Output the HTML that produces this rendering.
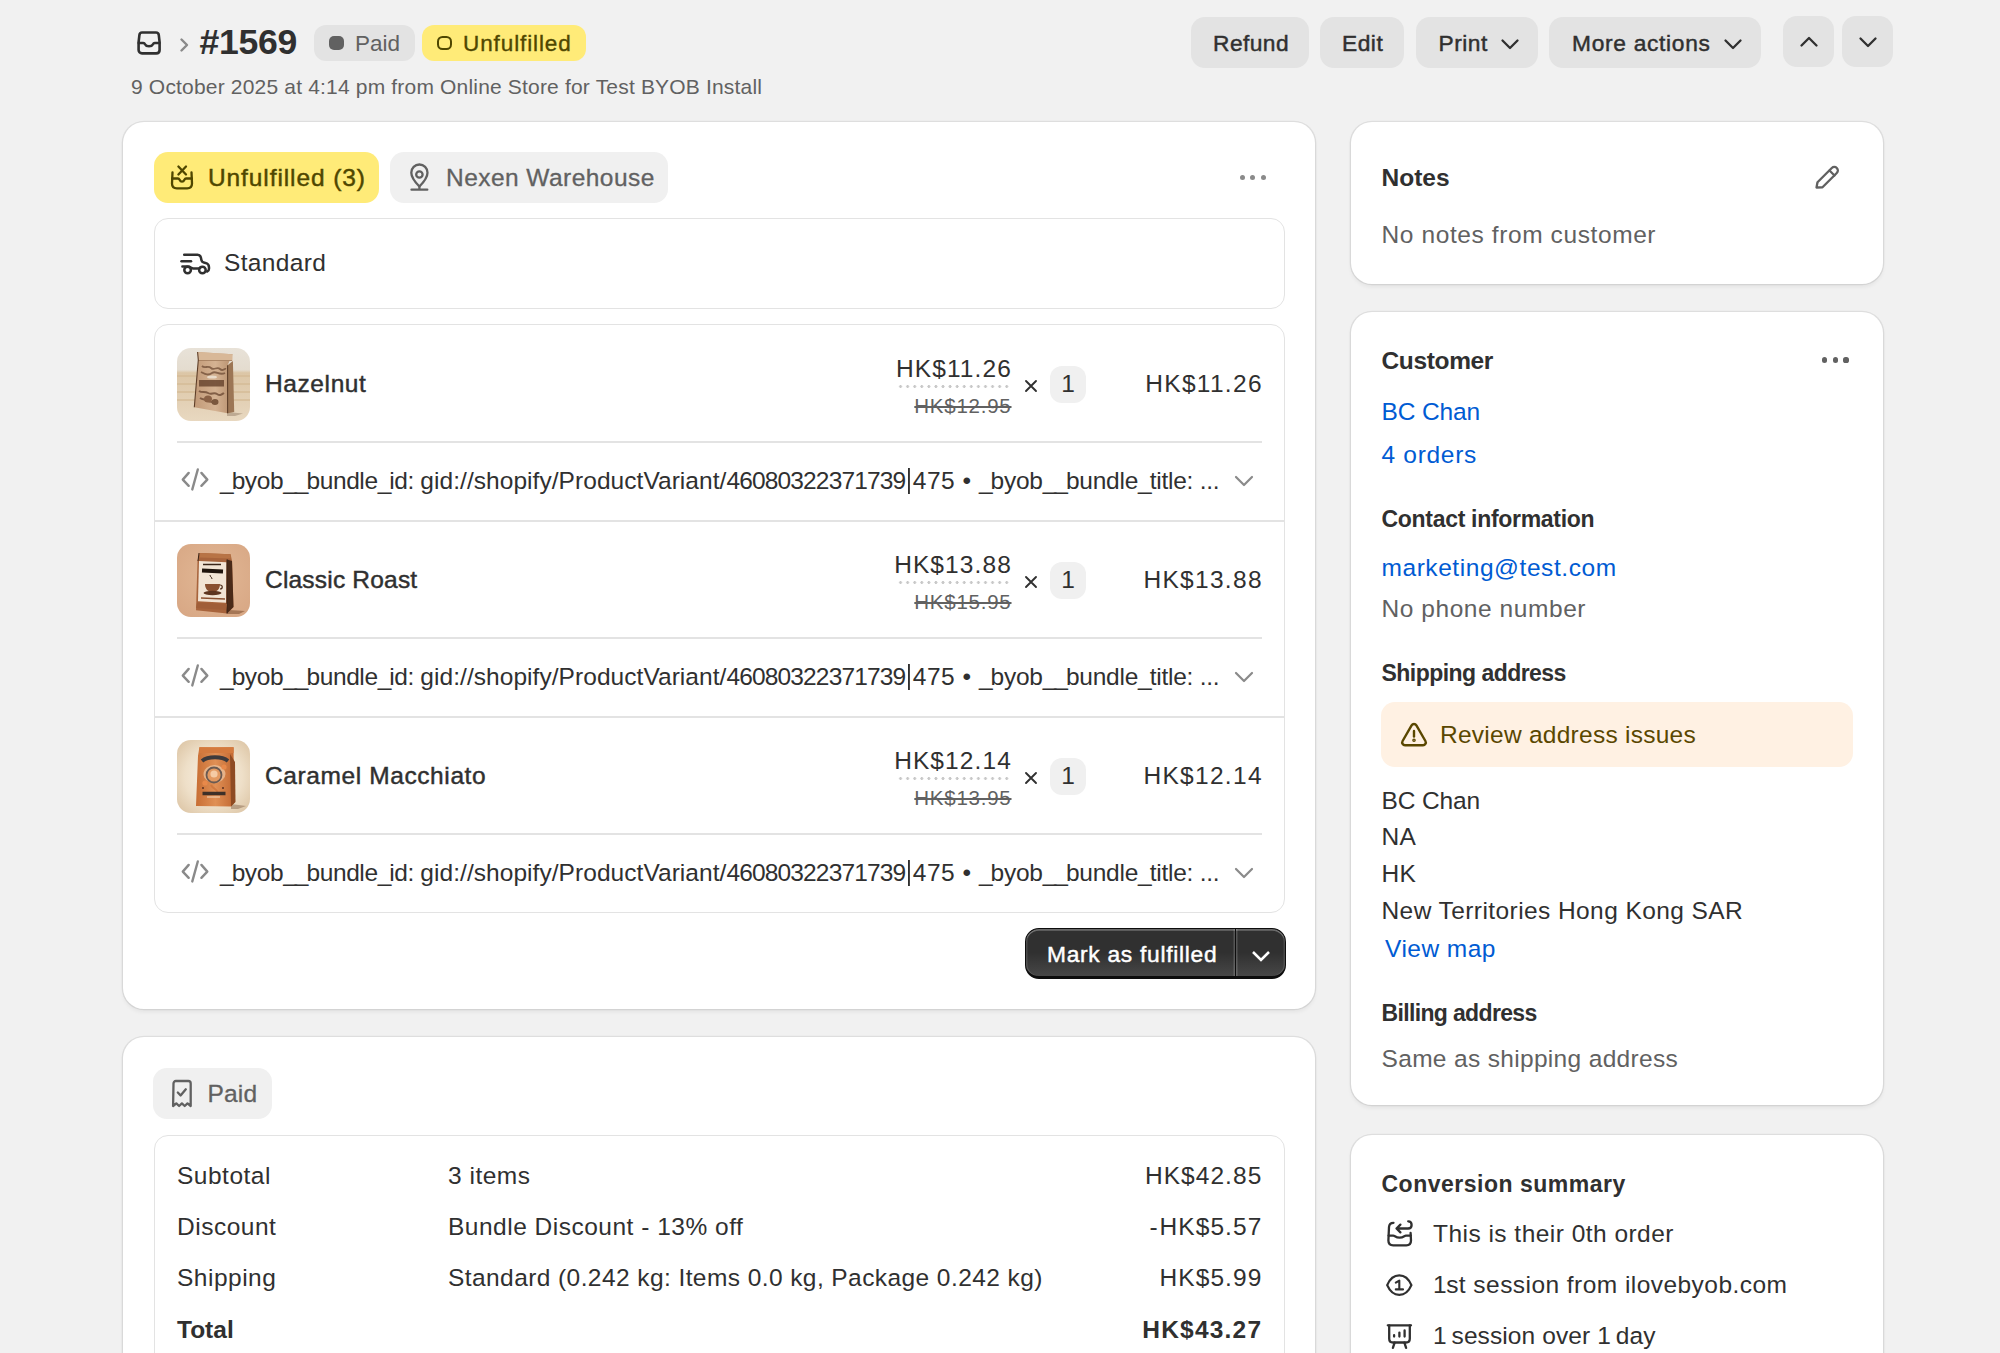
<!DOCTYPE html>
<html><head><meta charset="utf-8">
<style>
*{box-sizing:border-box;margin:0;padding:0}
html,body{width:2000px;height:1353px;overflow:hidden;background:#f1f1f1}
body{position:relative;font-family:"Liberation Sans",sans-serif;color:#303030}
.a{position:absolute}
.t{position:absolute;line-height:1;white-space:nowrap}
.card{position:absolute;background:#fff;border-radius:21px;box-shadow:0 0 0 1.3px rgba(0,0,0,.075),0 2.5px 4px rgba(0,0,0,.06)}
.btn{position:absolute;background:#e3e3e3;border-radius:14px}
.box{position:absolute;border:1.75px solid #e3e3e3;border-radius:14px}
.nm{letter-spacing:0.6px}
.sm{-webkit-text-stroke:0.45px currentColor}
.f24{font-size:24.5px}
.sec{color:#616161}
.blue{color:#005bd3}
svg{position:absolute;overflow:visible}
</style></head><body>

<!-- ===== HEADER ===== -->
<svg style="left:137px;top:31px" width="24" height="24" viewBox="0 0 24 24" fill="none" stroke="#303030" stroke-width="2.6" stroke-linecap="round" stroke-linejoin="round">
  <path d="M5 1.5h14c1.6 0 2.6 1.1 2.8 2.6l.8 7V19c0 2-1.4 3.4-3.4 3.4H5c-2 0-3.4-1.4-3.4-3.4v-7.9l.8-7C2.6 2.6 3.5 1.5 5 1.5z"/>
  <path d="M1.8 12h4.4c1 0 1.6.7 2 1.5.5 1 1.9 1.8 3.8 1.8s3.3-.8 3.8-1.8c.4-.8 1-1.5 2-1.5h4.4"/>
</svg>
<svg style="left:180px;top:38px" width="9" height="14" viewBox="0 0 9 14" fill="none" stroke="#8a8a8a" stroke-width="2.4" stroke-linecap="round" stroke-linejoin="round"><path d="M1.5 1.5l5.5 5.5-5.5 5.5"/></svg>
<div class="t" style="left:199.5px;top:24.5px;font-size:35.6px;font-weight:bold;letter-spacing:-0.3px">#1569</div>

<div class="a" style="left:314px;top:24.5px;width:101px;height:36px;border-radius:12px;background:#e3e3e3"></div>
<div class="a" style="left:328.5px;top:36px;width:15px;height:14px;border-radius:5px;background:#616161"></div>
<div class="t sec" style="left:355px;top:33px;font-size:22.5px">Paid</div>

<div class="a" style="left:422px;top:24.5px;width:164px;height:36px;border-radius:12px;background:#ffeb78"></div>
<div class="a" style="left:436.5px;top:36px;width:15px;height:14px;border-radius:5.5px;border:2.4px solid #4f4700"></div>
<div class="t" style="left:463px;top:33px;font-size:22.5px;color:#4f4700;letter-spacing:0.9px;-webkit-text-stroke:0.35px #4f4700">Unfulfilled</div>

<div class="t sec" style="left:131px;top:76px;font-size:21px;letter-spacing:0.18px">9 October 2025 at 4:14 pm from Online Store for Test BYOB Install</div>

<div class="btn" style="left:1191px;top:17px;width:118px;height:51px"></div>
<div class="t sm" style="left:1213px;top:32px;font-size:22.75px;letter-spacing:0.45px">Refund</div>
<div class="btn" style="left:1320px;top:17px;width:84px;height:51px"></div>
<div class="t sm" style="left:1342px;top:32px;font-size:22.75px;letter-spacing:0.5px">Edit</div>
<div class="btn" style="left:1416px;top:17px;width:122px;height:51px"></div>
<div class="t sm" style="left:1438.5px;top:32px;font-size:22.75px;letter-spacing:0.5px">Print</div>
<svg style="left:1501px;top:39px" width="18" height="11" viewBox="0 0 18 11" fill="none" stroke="#303030" stroke-width="2.3" stroke-linecap="round" stroke-linejoin="round"><path d="M1.5 1.5l7.5 7.5 7.5-7.5"/></svg>
<div class="btn" style="left:1549px;top:17px;width:212px;height:51px"></div>
<div class="t sm" style="left:1572px;top:32px;font-size:22.75px;letter-spacing:0.7px">More actions</div>
<svg style="left:1723.5px;top:39px" width="18" height="11" viewBox="0 0 18 11" fill="none" stroke="#303030" stroke-width="2.3" stroke-linecap="round" stroke-linejoin="round"><path d="M1.5 1.5l7.5 7.5 7.5-7.5"/></svg>
<div class="btn" style="left:1783px;top:16px;width:51px;height:51px"></div>
<svg style="left:1800px;top:36px" width="18" height="11" viewBox="0 0 18 11" fill="none" stroke="#303030" stroke-width="2.3" stroke-linecap="round" stroke-linejoin="round"><path d="M1.5 9.5l7.5-7.5 7.5 7.5"/></svg>
<div class="btn" style="left:1842px;top:16px;width:51px;height:51px"></div>
<svg style="left:1858.5px;top:37px" width="18" height="11" viewBox="0 0 18 11" fill="none" stroke="#303030" stroke-width="2.3" stroke-linecap="round" stroke-linejoin="round"><path d="M1.5 1.5l7.5 7.5 7.5-7.5"/></svg>

<!-- ===== MAIN CARD 1 ===== -->
<div class="card" style="left:123px;top:122px;width:1192px;height:887px"></div>

<!-- tags -->
<div class="a" style="left:153.5px;top:152px;width:225px;height:51px;border-radius:14px;background:#ffeb78"></div>
<svg style="left:168px;top:163px" width="28" height="28" viewBox="0 0 28 28" fill="none" stroke="#4f4700" stroke-width="2.3" stroke-linecap="round" stroke-linejoin="round">
 <path d="M10.4 3.5l7.6 8M18 3.5l-7.6 8"/>
 <path d="M4.5 9.4L4 20.5c0 3.2 1.8 4.8 4.8 4.8h10.4c3 0 4.8-1.6 4.8-4.8L23.5 9.4"/>
 <path d="M4.2 15.5h5.8c.8 0 1.2.5 1.6 1.3.5 1.2 1.3 1.9 2.4 1.9s1.9-.7 2.4-1.9c.4-.8.8-1.3 1.6-1.3h5.8"/>
</svg>
<div class="t sm" style="left:208px;top:166px;font-size:24.5px;color:#4f4700;letter-spacing:0.9px">Unfulfilled (3)</div>

<div class="a" style="left:390px;top:152px;width:278px;height:51px;border-radius:14px;background:#f0f0f0"></div>
<svg style="left:405px;top:160px" width="28" height="35" viewBox="0 0 28 35" fill="none" stroke="#616161" stroke-width="2.3" stroke-linecap="round" stroke-linejoin="round">
 <path d="M14.4 26.5C9.5 21.5 6.3 17 6.3 12.7c0-4.6 3.6-8.2 8.1-8.2s8.1 3.6 8.1 8.2c0 4.3-3.2 8.8-8.1 13.8z"/>
 <circle cx="14.4" cy="14.5" r="3.2"/>
 <path d="M6.5 29.7h15.8M14.4 26.5v3"/>
</svg>
<div class="t sec" style="left:446px;top:165.5px;font-size:24.5px;letter-spacing:0.45px;-webkit-text-stroke:0.3px #616161">Nexen Warehouse</div>

<div class="a" style="left:1239.8px;top:175px;width:5.2px;height:5.2px;border-radius:50%;background:#8a8a8a"></div>
<div class="a" style="left:1250.25px;top:175px;width:5.2px;height:5.2px;border-radius:50%;background:#8a8a8a"></div>
<div class="a" style="left:1260.7px;top:175px;width:5.2px;height:5.2px;border-radius:50%;background:#8a8a8a"></div>

<!-- standard box -->
<div class="box" style="left:153.5px;top:218px;width:1131px;height:91px"></div>
<svg style="left:175px;top:250px" width="40" height="30" viewBox="0 0 40 30" fill="none" stroke="#303030" stroke-width="2.5" stroke-linecap="round" stroke-linejoin="round">
 <path d="M9.2 4.7H22.6c1.6 0 2.8 1 3.2 2.6l.8 3.4c.3 1.1 1.1 1.7 2.2 1.9l1.6.3c2.2.5 3.6 2.2 3.6 4.4v1.4c0 1.4-.7 2.4-1.8 2.8"/>
 <path d="M6.5 11.2h9.5"/>
 <path d="M7.4 16.6h5.6c1.4 0 2.4.7 3.3 1.3.6.4 1.3.6 2 .6h4.6c.8 0 1.6-.3 2.2-.8"/>
 <circle cx="12.6" cy="20" r="3.3"/>
 <circle cx="27.4" cy="20" r="3.3"/>
</svg>
<div class="t" style="left:224px;top:251.3px;font-size:24.5px;letter-spacing:0.35px">Standard</div>

<!-- products box -->
<div class="box" style="left:153.5px;top:324px;width:1131px;height:589px"></div>

<div class="a img-hz" style="left:177px;top:348px;width:73px;height:73px;border-radius:14px;overflow:hidden"><svg width="73" height="73" viewBox="0 0 73 73" style="position:static;display:block">
<defs><linearGradient id="hzbg" x1="0" y1="0" x2="0" y2="1"><stop offset="0" stop-color="#e8e2d8"/><stop offset=".3" stop-color="#e4dccf"/><stop offset=".34" stop-color="#dcc6a6"/><stop offset="1" stop-color="#e8d8c0"/></linearGradient>
<linearGradient id="hzbag" x1="0" y1="0" x2="1" y2="0"><stop offset="0" stop-color="#c29a78"/><stop offset=".55" stop-color="#d4b292"/><stop offset="1" stop-color="#b68e6c"/></linearGradient></defs>
<rect width="73" height="73" fill="url(#hzbg)"/>
<path d="M0 28h73M0 36h73M0 44h73M0 52h73" stroke="#d5bb96" stroke-width="2" opacity=".7"/>
<path d="M50 64l16 1.5-8 2.5-8 0z" fill="#8b7560" opacity=".45"/>
<path d="M20.6 4L55.6 6.3 50.6 17.3 50.6 65.2 17.3 59.2 21.3 12z" fill="url(#hzbag)"/>
<path d="M20.6 4L55.6 6.3 55.4 13 21.3 12z" fill="#d8b898"/>
<path d="M21 12.5h34" stroke="#a07a5a" stroke-width=".8"/>
<path d="M50.6 17.3L55.9 13 57.2 63.9 50.6 65.2z" fill="#9c7655"/>
<path d="M20.6 4l.7 8-4 47.2M50.6 17.3v48" stroke="#5e3e28" stroke-width="1.1" fill="none"/>
<path d="M25 18c3 3 6-1 9 2s6-2 9 1 4-1 6 0M24 24c4 2 7 4 11 1s7 3 13 0" stroke="#6e4b34" stroke-width="1.8" fill="none" opacity=".75"/>
<ellipse cx="35" cy="29" rx="5" ry="1.6" fill="#efe6d8" opacity=".8"/>
<rect x="22" y="32" width="25" height="6.5" fill="#6a4630" opacity=".85"/>
<path d="M22 43c3 2 6 0 9 2s6-1 9 1 4 1 7-1M23 50c3 2 6 1 8 3 3 2 6 0 9 1" stroke="#6e4b34" stroke-width="2" fill="none" opacity=".8"/>
<ellipse cx="31" cy="51" rx="4" ry="3.5" fill="#8a6145"/>
<ellipse cx="38" cy="54" rx="3.5" ry="3" fill="#7b573d"/>
</svg></div>
<div class="t sm nm" style="left:265px;top:371.6px;font-size:24.5px">Hazelnut</div>
<div class="t" style="right:988.1px;top:357.3px;font-size:24.5px;letter-spacing:1.1px">HK$11.26</div>
<div class="a" style="left:897px;top:384.7px;width:114px;height:3px;background:radial-gradient(circle,#c8c8c8 1.2px,transparent 1.7px) 0 0/7.08px 3px repeat-x"></div>
<div class="t sec" style="right:988.5px;top:396px;font-size:20.5px;text-decoration:line-through;text-decoration-thickness:1.75px;letter-spacing:0.75px">HK$12.95</div>
<svg style="left:1025px;top:380px" width="12" height="12" viewBox="0 0 12 12" fill="none" stroke="#303030" stroke-width="1.9" stroke-linecap="round"><path d="M1 1l10 10M11 1L1 11"/></svg>
<div class="a" style="left:1050px;top:366px;width:36px;height:37px;border-radius:12px;background:#f0f0f0"></div>
<div class="t" style="left:1050px;width:36px;text-align:center;top:371.9px;font-size:24.5px">1</div>
<div class="t" style="right:737.2px;top:372.4px;font-size:24.5px;letter-spacing:1.3px">HK$11.26</div>
<div class="a" style="left:177px;top:441px;width:1085px;height:1.75px;background:#e3e3e3"></div>
<svg style="left:175px;top:462px" width="40" height="35" viewBox="0 0 40 35" fill="none" stroke="#8a8a8a" stroke-width="2.4" stroke-linecap="round" stroke-linejoin="round"><path d="M13.7 10.9L7.8 17.6l5.9 6.2M22.8 7.5l-5.5 19.9M26.4 10.9l5.9 6.7-5.9 6.2"/></svg>
<div class="t" style="left:220px;top:467.8px;font-size:24.5px"><span style="letter-spacing:-0.4px"><span style="letter-spacing:-2.0px">_</span>byob<span style="letter-spacing:-2.0px">_</span><span style="letter-spacing:-2.0px">_</span>bundle<span style="letter-spacing:-2.0px">_</span>id: </span><span style="letter-spacing:0.05px">gid://shopify/ProductVariant/</span><span style="letter-spacing:-0.85px">46080322371739</span><span style="display:inline-block;width:7.5px;height:26px;vertical-align:-5.5px;background:linear-gradient(#303030,#303030) 50% 0/1.9px 100% no-repeat"></span><span style="letter-spacing:0.5px">475 &#8226; </span><span style="letter-spacing:-0.25px"><span style="letter-spacing:-2.0px">_</span>byob<span style="letter-spacing:-2.0px">_</span><span style="letter-spacing:-2.0px">_</span>bundle<span style="letter-spacing:-2.0px">_</span>title: ...</span></div>
<svg style="left:1234px;top:474px" width="20" height="14" viewBox="0 0 20 14" fill="none" stroke="#8a8a8a" stroke-width="2.2" stroke-linecap="round" stroke-linejoin="round"><path d="M2 3l8 8 8-8"/></svg>
<div class="a" style="left:155px;top:520px;width:1129px;height:1.75px;background:#e3e3e3"></div>

<div class="a img-cr" style="left:177px;top:544px;width:73px;height:73px;border-radius:14px;overflow:hidden"><svg width="73" height="73" viewBox="0 0 73 73" style="position:static;display:block">
<defs><radialGradient id="crbg" cx=".5" cy=".45" r=".75"><stop offset="0" stop-color="#e2b896"/><stop offset="1" stop-color="#d7a683"/></radialGradient></defs>
<rect width="73" height="73" fill="url(#crbg)"/>
<path d="M52 66l16 1-6 3-12 0z" fill="#7a4a2c" opacity=".55"/>
<path d="M22.6 9L53.6 10.3 55 17 56.5 63 50 69.5 19 66.3 20.5 17z" fill="#a8643c"/>
<path d="M22.6 9L53.6 10.3 53.6 14.5 22.6 13.5z" fill="#b87446"/>
<path d="M50 15.5L55 17 56.5 63 50 69.5z" fill="#4a2a18"/>
<path d="M22 17l27.5 1.2-.5 40.5-28 -1.5z" fill="#f2e4d4"/>
<path d="M21 17l1-8M50 15.5v54" stroke="#3a2214" stroke-width="1" fill="none"/>
<path d="M26 20.5h18" stroke="#3a2518" stroke-width="1.6"/>
<path d="M25 26.5l21 1" stroke="#1f140c" stroke-width="4.2"/>
<path d="M33 31c0 2 2 2 2 4" stroke="#3a2518" stroke-width="1" fill="none"/>
<path d="M28 40c0 5 3 8 7.5 8s7.5-3 7.5-8z" fill="#8a5030"/>
<path d="M43 41c3 0 3 4 0 4" stroke="#4a2a18" stroke-width="1.2" fill="none"/>
<ellipse cx="35.5" cy="49" rx="9" ry="2.2" fill="#5e351f"/>
<path d="M24 54l24 1" stroke="#8a5030" stroke-width="1.5"/>
<path d="M20 58.5l30 1.5-1 6-30-2z" fill="#a05e38"/>
</svg></div>
<div class="t sm nm" style="left:265px;top:567.6px;font-size:24.5px;letter-spacing:0.2px">Classic Roast</div>
<div class="t" style="right:988.1px;top:553.3px;font-size:24.5px;letter-spacing:1.1px">HK$13.88</div>
<div class="a" style="left:897px;top:580.7px;width:114px;height:3px;background:radial-gradient(circle,#c8c8c8 1.2px,transparent 1.7px) 0 0/7.08px 3px repeat-x"></div>
<div class="t sec" style="right:988.5px;top:592px;font-size:20.5px;text-decoration:line-through;text-decoration-thickness:1.75px;letter-spacing:0.75px">HK$15.95</div>
<svg style="left:1025px;top:576px" width="12" height="12" viewBox="0 0 12 12" fill="none" stroke="#303030" stroke-width="1.9" stroke-linecap="round"><path d="M1 1l10 10M11 1L1 11"/></svg>
<div class="a" style="left:1050px;top:562px;width:36px;height:37px;border-radius:12px;background:#f0f0f0"></div>
<div class="t" style="left:1050px;width:36px;text-align:center;top:567.9px;font-size:24.5px">1</div>
<div class="t" style="right:737.2px;top:568.4px;font-size:24.5px;letter-spacing:1.3px">HK$13.88</div>
<div class="a" style="left:177px;top:637px;width:1085px;height:1.75px;background:#e3e3e3"></div>
<svg style="left:175px;top:658px" width="40" height="35" viewBox="0 0 40 35" fill="none" stroke="#8a8a8a" stroke-width="2.4" stroke-linecap="round" stroke-linejoin="round"><path d="M13.7 10.9L7.8 17.6l5.9 6.2M22.8 7.5l-5.5 19.9M26.4 10.9l5.9 6.7-5.9 6.2"/></svg>
<div class="t" style="left:220px;top:663.8px;font-size:24.5px"><span style="letter-spacing:-0.4px"><span style="letter-spacing:-2.0px">_</span>byob<span style="letter-spacing:-2.0px">_</span><span style="letter-spacing:-2.0px">_</span>bundle<span style="letter-spacing:-2.0px">_</span>id: </span><span style="letter-spacing:0.05px">gid://shopify/ProductVariant/</span><span style="letter-spacing:-0.85px">46080322371739</span><span style="display:inline-block;width:7.5px;height:26px;vertical-align:-5.5px;background:linear-gradient(#303030,#303030) 50% 0/1.9px 100% no-repeat"></span><span style="letter-spacing:0.5px">475 &#8226; </span><span style="letter-spacing:-0.25px"><span style="letter-spacing:-2.0px">_</span>byob<span style="letter-spacing:-2.0px">_</span><span style="letter-spacing:-2.0px">_</span>bundle<span style="letter-spacing:-2.0px">_</span>title: ...</span></div>
<svg style="left:1234px;top:670px" width="20" height="14" viewBox="0 0 20 14" fill="none" stroke="#8a8a8a" stroke-width="2.2" stroke-linecap="round" stroke-linejoin="round"><path d="M2 3l8 8 8-8"/></svg>
<div class="a" style="left:155px;top:716px;width:1129px;height:1.75px;background:#e3e3e3"></div>

<div class="a img-cm" style="left:177px;top:740px;width:73px;height:73px;border-radius:14px;overflow:hidden"><svg width="73" height="73" viewBox="0 0 73 73" style="position:static;display:block">
<defs><radialGradient id="cmbg" cx=".5" cy=".5" r=".72"><stop offset="0" stop-color="#faf2e6"/><stop offset=".55" stop-color="#eedfc8"/><stop offset="1" stop-color="#d9c09e"/></radialGradient>
<linearGradient id="cmbag" x1="0" y1="0" x2="1" y2="0"><stop offset="0" stop-color="#c86e34"/><stop offset=".5" stop-color="#e09055"/><stop offset="1" stop-color="#c06630"/></linearGradient></defs>
<rect width="73" height="73" fill="url(#cmbg)"/>
<path d="M54 64l15 2-8 3-7 0z" fill="#8a6a50" opacity=".5"/>
<path d="M22.4 7.3L56.6 7.3 56.6 16 58 62 54 66.5 19 66 21 16z" fill="url(#cmbag)"/>
<path d="M22.4 7.3L56.6 7.3 56.6 13 22.4 13z" fill="#d47a3e"/>
<path d="M53 14L58 22 58.5 62 54 66.5z" fill="#8e4a22"/>
<path d="M25 21c6-5 20-5 26 0" stroke="#3d3a3c" stroke-width="3.8" fill="none"/>
<ellipse cx="37.5" cy="34" rx="11" ry="9" fill="#f6dcc0" opacity=".55"/>
<circle cx="37" cy="35" r="7.5" fill="#e39a62" stroke="#6a5a52" stroke-width="1.8"/>
<circle cx="37" cy="34" r="3.6" fill="#f5cba5"/>
<circle cx="47" cy="27" r="2.6" fill="#e8894a"/>
<circle cx="28" cy="43" r="2.6" fill="#e8894a"/>
<path d="M34 45c2 4 6 4 7 8" stroke="#d07a40" stroke-width="2" fill="none"/>
<circle cx="26" cy="48" r="1" fill="#5a3020"/><circle cx="46" cy="48" r="1" fill="#5a3020"/>
<path d="M25.5 53.5h23" stroke="#3d3028" stroke-width="3.6"/>
<path d="M30 57h13" stroke="#f1d9bd" stroke-width="1.2"/>
</svg></div>
<div class="t sm nm" style="left:265px;top:763.6px;font-size:24.5px">Caramel Macchiato</div>
<div class="t" style="right:988.1px;top:749.3px;font-size:24.5px;letter-spacing:1.1px">HK$12.14</div>
<div class="a" style="left:897px;top:776.7px;width:114px;height:3px;background:radial-gradient(circle,#c8c8c8 1.2px,transparent 1.7px) 0 0/7.08px 3px repeat-x"></div>
<div class="t sec" style="right:988.5px;top:788px;font-size:20.5px;text-decoration:line-through;text-decoration-thickness:1.75px;letter-spacing:0.75px">HK$13.95</div>
<svg style="left:1025px;top:772px" width="12" height="12" viewBox="0 0 12 12" fill="none" stroke="#303030" stroke-width="1.9" stroke-linecap="round"><path d="M1 1l10 10M11 1L1 11"/></svg>
<div class="a" style="left:1050px;top:758px;width:36px;height:37px;border-radius:12px;background:#f0f0f0"></div>
<div class="t" style="left:1050px;width:36px;text-align:center;top:763.9px;font-size:24.5px">1</div>
<div class="t" style="right:737.2px;top:764.4px;font-size:24.5px;letter-spacing:1.3px">HK$12.14</div>
<div class="a" style="left:177px;top:833px;width:1085px;height:1.75px;background:#e3e3e3"></div>
<svg style="left:175px;top:854px" width="40" height="35" viewBox="0 0 40 35" fill="none" stroke="#8a8a8a" stroke-width="2.4" stroke-linecap="round" stroke-linejoin="round"><path d="M13.7 10.9L7.8 17.6l5.9 6.2M22.8 7.5l-5.5 19.9M26.4 10.9l5.9 6.7-5.9 6.2"/></svg>
<div class="t" style="left:220px;top:859.8px;font-size:24.5px"><span style="letter-spacing:-0.4px"><span style="letter-spacing:-2.0px">_</span>byob<span style="letter-spacing:-2.0px">_</span><span style="letter-spacing:-2.0px">_</span>bundle<span style="letter-spacing:-2.0px">_</span>id: </span><span style="letter-spacing:0.05px">gid://shopify/ProductVariant/</span><span style="letter-spacing:-0.85px">46080322371739</span><span style="display:inline-block;width:7.5px;height:26px;vertical-align:-5.5px;background:linear-gradient(#303030,#303030) 50% 0/1.9px 100% no-repeat"></span><span style="letter-spacing:0.5px">475 &#8226; </span><span style="letter-spacing:-0.25px"><span style="letter-spacing:-2.0px">_</span>byob<span style="letter-spacing:-2.0px">_</span><span style="letter-spacing:-2.0px">_</span>bundle<span style="letter-spacing:-2.0px">_</span>title: ...</span></div>
<svg style="left:1234px;top:866px" width="20" height="14" viewBox="0 0 20 14" fill="none" stroke="#8a8a8a" stroke-width="2.2" stroke-linecap="round" stroke-linejoin="round"><path d="M2 3l8 8 8-8"/></svg>

<!-- mark as fulfilled -->
<div class="a" style="left:1025px;top:928px;width:210.5px;height:51px;border-radius:14px 0 0 14px;border:1.75px solid #0d0d0d;border-bottom-width:3.5px;border-right-width:1px;background:linear-gradient(#303030 50%,#474747);box-shadow:inset 0 1.75px 0 rgba(255,255,255,.28),inset 1.5px 0 0 rgba(255,255,255,.12),inset -1.5px 0 0 rgba(255,255,255,.18)"></div>
<div class="a" style="left:1235px;top:928px;width:50.5px;height:51px;border-radius:0 14px 14px 0;border:1.75px solid #0d0d0d;border-bottom-width:3.5px;border-left-width:1px;background:linear-gradient(#303030 50%,#474747);box-shadow:inset 0 1.75px 0 rgba(255,255,255,.28),inset 1.5px 0 0 rgba(255,255,255,.18),inset -1.5px 0 0 rgba(255,255,255,.12)"></div>
<div class="t sm" style="left:1047px;top:943px;font-size:22.75px;color:#fff;letter-spacing:0.72px">Mark as fulfilled</div>
<svg style="left:1250px;top:949px" width="22" height="14" viewBox="0 0 22 14" fill="none" stroke="#fff" stroke-width="2.5" stroke-linecap="butt" stroke-linejoin="miter"><path d="M3 3l8 8 8-8"/></svg>


<!-- ===== MAIN CARD 2 ===== -->
<div class="card" style="left:123px;top:1037px;width:1192px;height:400px"></div>

<!-- paid tag -->
<div class="a" style="left:153px;top:1068px;width:119px;height:51px;border-radius:14px;background:#f0f0f0"></div>
<svg style="left:168px;top:1078px" width="30" height="32" viewBox="0 0 30 32" fill="none" stroke="#616161" stroke-width="2.3" stroke-linecap="round" stroke-linejoin="round">
 <path d="M5.5 5.5c0-1.4 1-2.5 2.4-2.5h12.4c1.4 0 2.4 1.1 2.4 2.5v22.5l-3.2-2.6-2.8 2.6-2.8-2.6-2.8 2.6-2.8-2.6-3.2 2.6z"/>
 <path d="M9.8 14.5l2.8 3 5.2-6.2"/>
</svg>
<div class="t sec" style="left:207.5px;top:1082px;font-size:24.5px;letter-spacing:0.2px;-webkit-text-stroke:0.3px #616161">Paid</div>
<div class="box" style="left:153.5px;top:1134.5px;width:1131px;height:300px"></div>
<div class="t" style="left:177px;top:1164.3px;font-size:24.5px;letter-spacing:0.5px">Subtotal</div>
<div class="t" style="left:448px;top:1164.3px;font-size:24.5px;letter-spacing:0.5px">3 items</div>
<div class="t" style="right:737.7px;top:1164.3px;font-size:24.5px;letter-spacing:1.05px">HK$42.85</div>
<div class="t" style="left:177px;top:1215.3px;font-size:24.5px;letter-spacing:0.5px">Discount</div>
<div class="t" style="left:448px;top:1215.3px;font-size:24.5px;letter-spacing:0.5px">Bundle Discount - 13% off</div>
<div class="t" style="right:737.7px;top:1215.3px;font-size:24.5px;letter-spacing:1.05px"><span style="letter-spacing:2px">-</span>HK$5.57</div>
<div class="t" style="left:177px;top:1266.3px;font-size:24.5px;letter-spacing:0.5px">Shipping</div>
<div class="t" style="left:448px;top:1266.3px;font-size:24.5px;letter-spacing:0.42px">Standard (0.242 kg: Items 0.0 kg, Package 0.242 kg)</div>
<div class="t" style="right:737.7px;top:1266.3px;font-size:24.5px;letter-spacing:1.05px">HK$5.99</div>
<div class="t" style="left:177px;top:1317.8px;font-size:24.5px;font-weight:bold">Total</div>
<div class="t" style="right:737.8px;top:1317.8px;font-size:24.5px;font-weight:bold;letter-spacing:1.2px">HK$43.27</div>


<!-- ===== RIGHT COLUMN ===== -->
<div class="card" style="left:1351px;top:122px;width:532px;height:162px"></div>
<div class="card" style="left:1351px;top:312px;width:532px;height:793px"></div>
<div class="card" style="left:1351px;top:1135px;width:532px;height:300px"></div>

<!-- notes -->
<div class="t" style="left:1381.5px;top:165.7px;font-size:24.5px;font-weight:bold">Notes</div>
<svg style="left:1812px;top:162px" width="32" height="30" viewBox="0 0 32 30" fill="none" stroke="#616161" stroke-width="2.3" stroke-linecap="round" stroke-linejoin="round">
 <path d="M4.5 25.5l1-5.2L19.8 6c1.4-1.4 3.6-1.4 5 0s1.4 3.6 0 5L10.5 25.3z"/>
 <path d="M17.5 8.5l5 5"/>
</svg>
<div class="t sec" style="left:1381.5px;top:223.3px;font-size:24.5px;letter-spacing:0.6px">No notes from customer</div>

<!-- customer -->
<div class="t" style="left:1381.5px;top:348.7px;font-size:24.5px;font-weight:bold;letter-spacing:-0.35px">Customer</div>
<div class="a" style="left:1821.8px;top:357.4px;width:5.2px;height:5.2px;border-radius:50%;background:#616161"></div>
<div class="a" style="left:1832.6px;top:357.4px;width:5.2px;height:5.2px;border-radius:50%;background:#616161"></div>
<div class="a" style="left:1843.4px;top:357.4px;width:5.2px;height:5.2px;border-radius:50%;background:#616161"></div>
<div class="t blue" style="left:1381.5px;top:399.7px;font-size:24.5px;letter-spacing:-0.15px">BC Chan</div>
<div class="t blue" style="left:1381.5px;top:443.2px;font-size:24.5px;letter-spacing:0.7px">4 orders</div>
<div class="t" style="left:1381.5px;top:508px;font-size:23px;font-weight:bold;letter-spacing:-0.3px">Contact information</div>
<div class="t blue" style="left:1381.5px;top:556.3px;font-size:24.5px;letter-spacing:0.56px">marketing@test.com</div>
<div class="t sec" style="left:1381.5px;top:597px;font-size:24.5px;letter-spacing:0.56px">No phone number</div>
<div class="t" style="left:1381.5px;top:662px;font-size:23px;font-weight:bold;letter-spacing:-0.54px">Shipping address</div>
<div class="a" style="left:1381px;top:702px;width:472px;height:65px;border-radius:14px;background:#fff1e3"></div>
<svg style="left:1399px;top:719.5px" width="30" height="30" viewBox="0 0 30 30" fill="none" stroke="#5a4700" stroke-width="2.4" stroke-linecap="round" stroke-linejoin="round">
 <path d="M12.6 5.4c1.1-1.9 3.7-1.9 4.8 0l9 15.6c1.1 1.9-.3 4.2-2.4 4.2H6c-2.1 0-3.5-2.3-2.4-4.2z"/>
 <path d="M15 11v5.5"/>
 <circle cx="15" cy="20.3" r=".6" fill="#5a4700"/>
</svg>
<div class="t" style="left:1440px;top:722.5px;font-size:24.5px;color:#5a4700;letter-spacing:0.26px">Review address issues</div>
<div class="t" style="left:1381.5px;top:788.5px;font-size:24.5px;letter-spacing:-0.15px">BC Chan</div>
<div class="t" style="left:1381.5px;top:825.2px;font-size:24.5px;letter-spacing:0.2px">NA</div>
<div class="t" style="left:1381.5px;top:861.9px;font-size:24.5px;letter-spacing:0.2px">HK</div>
<div class="t" style="left:1381.5px;top:898.6px;font-size:24.5px;letter-spacing:0.42px">New Territories Hong Kong SAR</div>
<div class="t blue" style="left:1385px;top:936.6px;font-size:24.5px;letter-spacing:0.48px">View map</div>
<div class="t" style="left:1381.5px;top:1001.5px;font-size:23px;font-weight:bold;letter-spacing:-0.65px">Billing address</div>
<div class="t sec" style="left:1381.5px;top:1046.6px;font-size:24.5px;letter-spacing:0.33px">Same as shipping address</div>

<!-- conversion -->
<div class="t" style="left:1381.5px;top:1172.5px;font-size:23px;font-weight:bold;letter-spacing:0.5px">Conversion summary</div>
<svg style="left:1378px;top:1212px" width="42" height="141" viewBox="0 0 42 141" fill="none" stroke="#303030" stroke-width="2.3" stroke-linecap="round" stroke-linejoin="round">
 <path d="M15.5 10.8C12.8 10.8 11.2 12.4 11 15L10.4 28.5C10.4 31.6 12.2 33.3 15.2 33.3H28.3C31.3 33.3 33 31.6 33 28.5L32.6 21"/>
 <path d="M10.6 23.6H15.3C16.8 23.6 17.6 25.6 21.6 25.6S26.4 23.6 27.9 23.6H32.8"/>
 <path d="M30.2 9.3C32.4 9.3 33.6 10.8 33.6 12.9S32.2 16.5 30.1 16.5H18.6M22.4 12.6L18.5 16.5L22.4 20.4"/>
 <path d="M9.2 73.1C12 66.6 16.4 63.4 21.3 63.4S30.6 66.6 33.4 73.1C30.6 79.6 26.2 82.8 21.3 82.8S12 79.6 9.2 73.1Z"/>
 <path d="M17.8 70.6L21.3 68.6V77.4M17.8 77.4H25" stroke-width="2.1"/>
 <path d="M9.8 113.3H33"/>
 <path d="M11.2 113.3V126.8C11.2 129.3 12.6 130.5 15 130.5H28C30.4 130.5 31.8 129.3 31.8 126.8V113.3"/>
 <path d="M16.6 130.6L14.9 135.8M26.4 130.6L28.1 135.8"/>
 <path d="M16.1 123.2V124.6M21.4 120.6V124.6M26.6 118.5V124.6"/>
</svg>
<div class="t" style="left:1433px;top:1222px;font-size:24.5px;letter-spacing:0.47px">This is their 0th order</div>
<div class="t" style="left:1433px;top:1273px;font-size:24.5px;letter-spacing:0.45px"><span style="letter-spacing:-0.5px">1</span>st session from ilovebyob.com</div>
<div class="t" style="left:1433px;top:1324.2px;font-size:24.5px;letter-spacing:0.1px"><span style="letter-spacing:-2px">1</span> session over <span style="letter-spacing:-2px">1</span> day</div>

</body></html>
